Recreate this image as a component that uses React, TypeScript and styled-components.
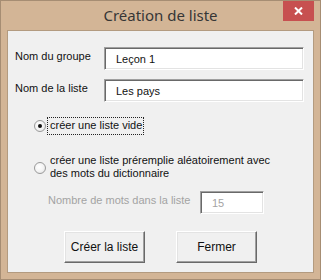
import React from 'react';
import styled, { createGlobalStyle } from 'styled-components';

const GlobalStyle = createGlobalStyle`
    html, body {
        margin: 0;
        padding: 0;
        background: #d3b596;
    }
`

const Window = styled.div`
    width: 321px;
    height: 280px;
    box-sizing: border-box;
    border: 1px solid #a68d73;
    background: #d3b596;
    display: flex;
    flex-direction: column;
    font-family: "Liberation Sans", Arial, sans-serif;
`

const TitleBar = styled.div`
    height: 29px;
    display: grid;
    grid-template-columns: 1fr auto 1fr;
    align-items: start;
`

const Title = styled.div`
    grid-column: 2;
    padding-top: 4px;
    font-family: "Noto Sans", "Open Sans", sans-serif;
    font-size: 15px;
    color: #363636;
`

const CloseButton = styled.div`
    grid-column: 3;
    justify-self: end;
    width: 31px;
    height: 20px;
    margin-right: 6px;
    background: #c75050;
    display: flex;
    align-items: center;
    justify-content: center;
`

const Client = styled.div`
    flex: 1;
    margin: 0 6px 6px 6px;
    border: 1px solid #b39b80;
    background: #f0f0f0;
    padding: 16px 9px 0 7px;
    display: flex;
    flex-direction: column;
    font-size: 11px;
    color: #111;
`

const FieldRow = styled.div<{ $gap?: number }>`
    display: flex;
    justify-content: space-between;
    align-items: flex-start;
    margin-top: ${p => p.$gap ?? 0}px;
`

const Label = styled.div<{ $muted?: boolean }>`
    padding-top: 3px;
    color: ${p => (p.$muted ? '#a3a3a3' : '#111')};
`

const TextBox = styled.div<{ $width: number; $muted?: boolean }>`
    width: ${p => p.$width}px;
    height: 23px;
    box-sizing: border-box;
    background: #fff;
    border-top: 1px solid #a0a0a0;
    border-left: 1px solid #a0a0a0;
    border-bottom: 1px solid #fff;
    border-right: 1px solid #fff;
    box-shadow: inset 1px 1px 0 #696969, inset -1px -1px 0 #e3e3e3;
    padding: 0 0 0 11px;
    display: flex;
    align-items: center;
    color: ${p => (p.$muted ? '#a3a3a3' : '#111')};
`

const OptionRow = styled.div<{ $gap: number }>`
    display: flex;
    align-items: center;
    margin: ${p => p.$gap}px 0 0 19px;
`

const RadioDot = styled.span<{ $checked?: boolean }>`
    width: 12px;
    height: 12px;
    box-sizing: border-box;
    border-radius: 50%;
    border: 1px solid #9a9a9a;
    background: radial-gradient(circle at 40% 40%, #ffffff 0%, #f4f4f4 50%, #dcdcdc 100%);
    display: flex;
    align-items: center;
    justify-content: center;
    flex-shrink: 0;

    &::after {
        content: '';
        display: ${p => (p.$checked ? 'block' : 'none')};
        width: 4px;
        height: 4px;
        border-radius: 50%;
        background: #111;
    }
`

const OptionText = styled.span<{ $focused?: boolean }>`
    margin-left: 2px;
    padding: 1px 1px 2px 2px;
    line-height: 13px;
    outline: ${p => (p.$focused ? '1px dotted #222' : 'none')};
    outline-offset: 0;
`

const CountRow = styled.div`
    display: flex;
    align-items: flex-start;
    justify-content: space-between;
    width: 216px;
    margin: 9px 0 0 33px;
`

const ButtonRow = styled.div`
    display: flex;
    justify-content: center;
    gap: 31px;
    margin: 17px -9px 0 -7px;
`

const Button = styled.div`
    width: 81px;
    height: 32px;
    box-sizing: border-box;
    background: #f0f0f0;
    border-top: 1px solid #fff;
    border-left: 1px solid #fff;
    border-bottom: 1px solid #696969;
    border-right: 1px solid #696969;
    box-shadow: inset -1px -1px 0 #a0a0a0, inset 1px 1px 0 #e3e3e3;
    display: flex;
    align-items: center;
    justify-content: center;
    font-size: 12px;
    color: #111;
`

export default function App(): JSX.Element {
    return (
        <>
            <GlobalStyle />
            <Window>
                <TitleBar>
                    <Title>Création de liste</Title>
                    <CloseButton>
                        <svg width="9" height="8" viewBox="0 0 9 8">
                            <path d="M1 0.5 L8 7.5 M8 0.5 L1 7.5" stroke="#fff" strokeWidth="2" />
                        </svg>
                    </CloseButton>
                </TitleBar>
                <Client>
                    <FieldRow>
                        <Label>Nom du groupe</Label>
                        <TextBox $width={200}>Leçon 1</TextBox>
                    </FieldRow>
                    <FieldRow $gap={9}>
                        <Label>Nom de la liste</Label>
                        <TextBox $width={200}>Les pays</TextBox>
                    </FieldRow>
                    <OptionRow $gap={16}>
                        <RadioDot $checked />
                        <OptionText $focused>créer une liste vide</OptionText>
                    </OptionRow>
                    <OptionRow $gap={19}>
                        <RadioDot />
                        <OptionText>
                            créer une liste préremplie aléatoirement avec<br />
                            des mots du dictionnaire
                        </OptionText>
                    </OptionRow>
                    <CountRow>
                        <Label $muted>Nombre de mots dans la liste</Label>
                        <TextBox $width={64} $muted>15</TextBox>
                    </CountRow>
                    <ButtonRow>
                        <Button>Créer la liste</Button>
                        <Button>Fermer</Button>
                    </ButtonRow>
                </Client>
            </Window>
        </>
    )
}
